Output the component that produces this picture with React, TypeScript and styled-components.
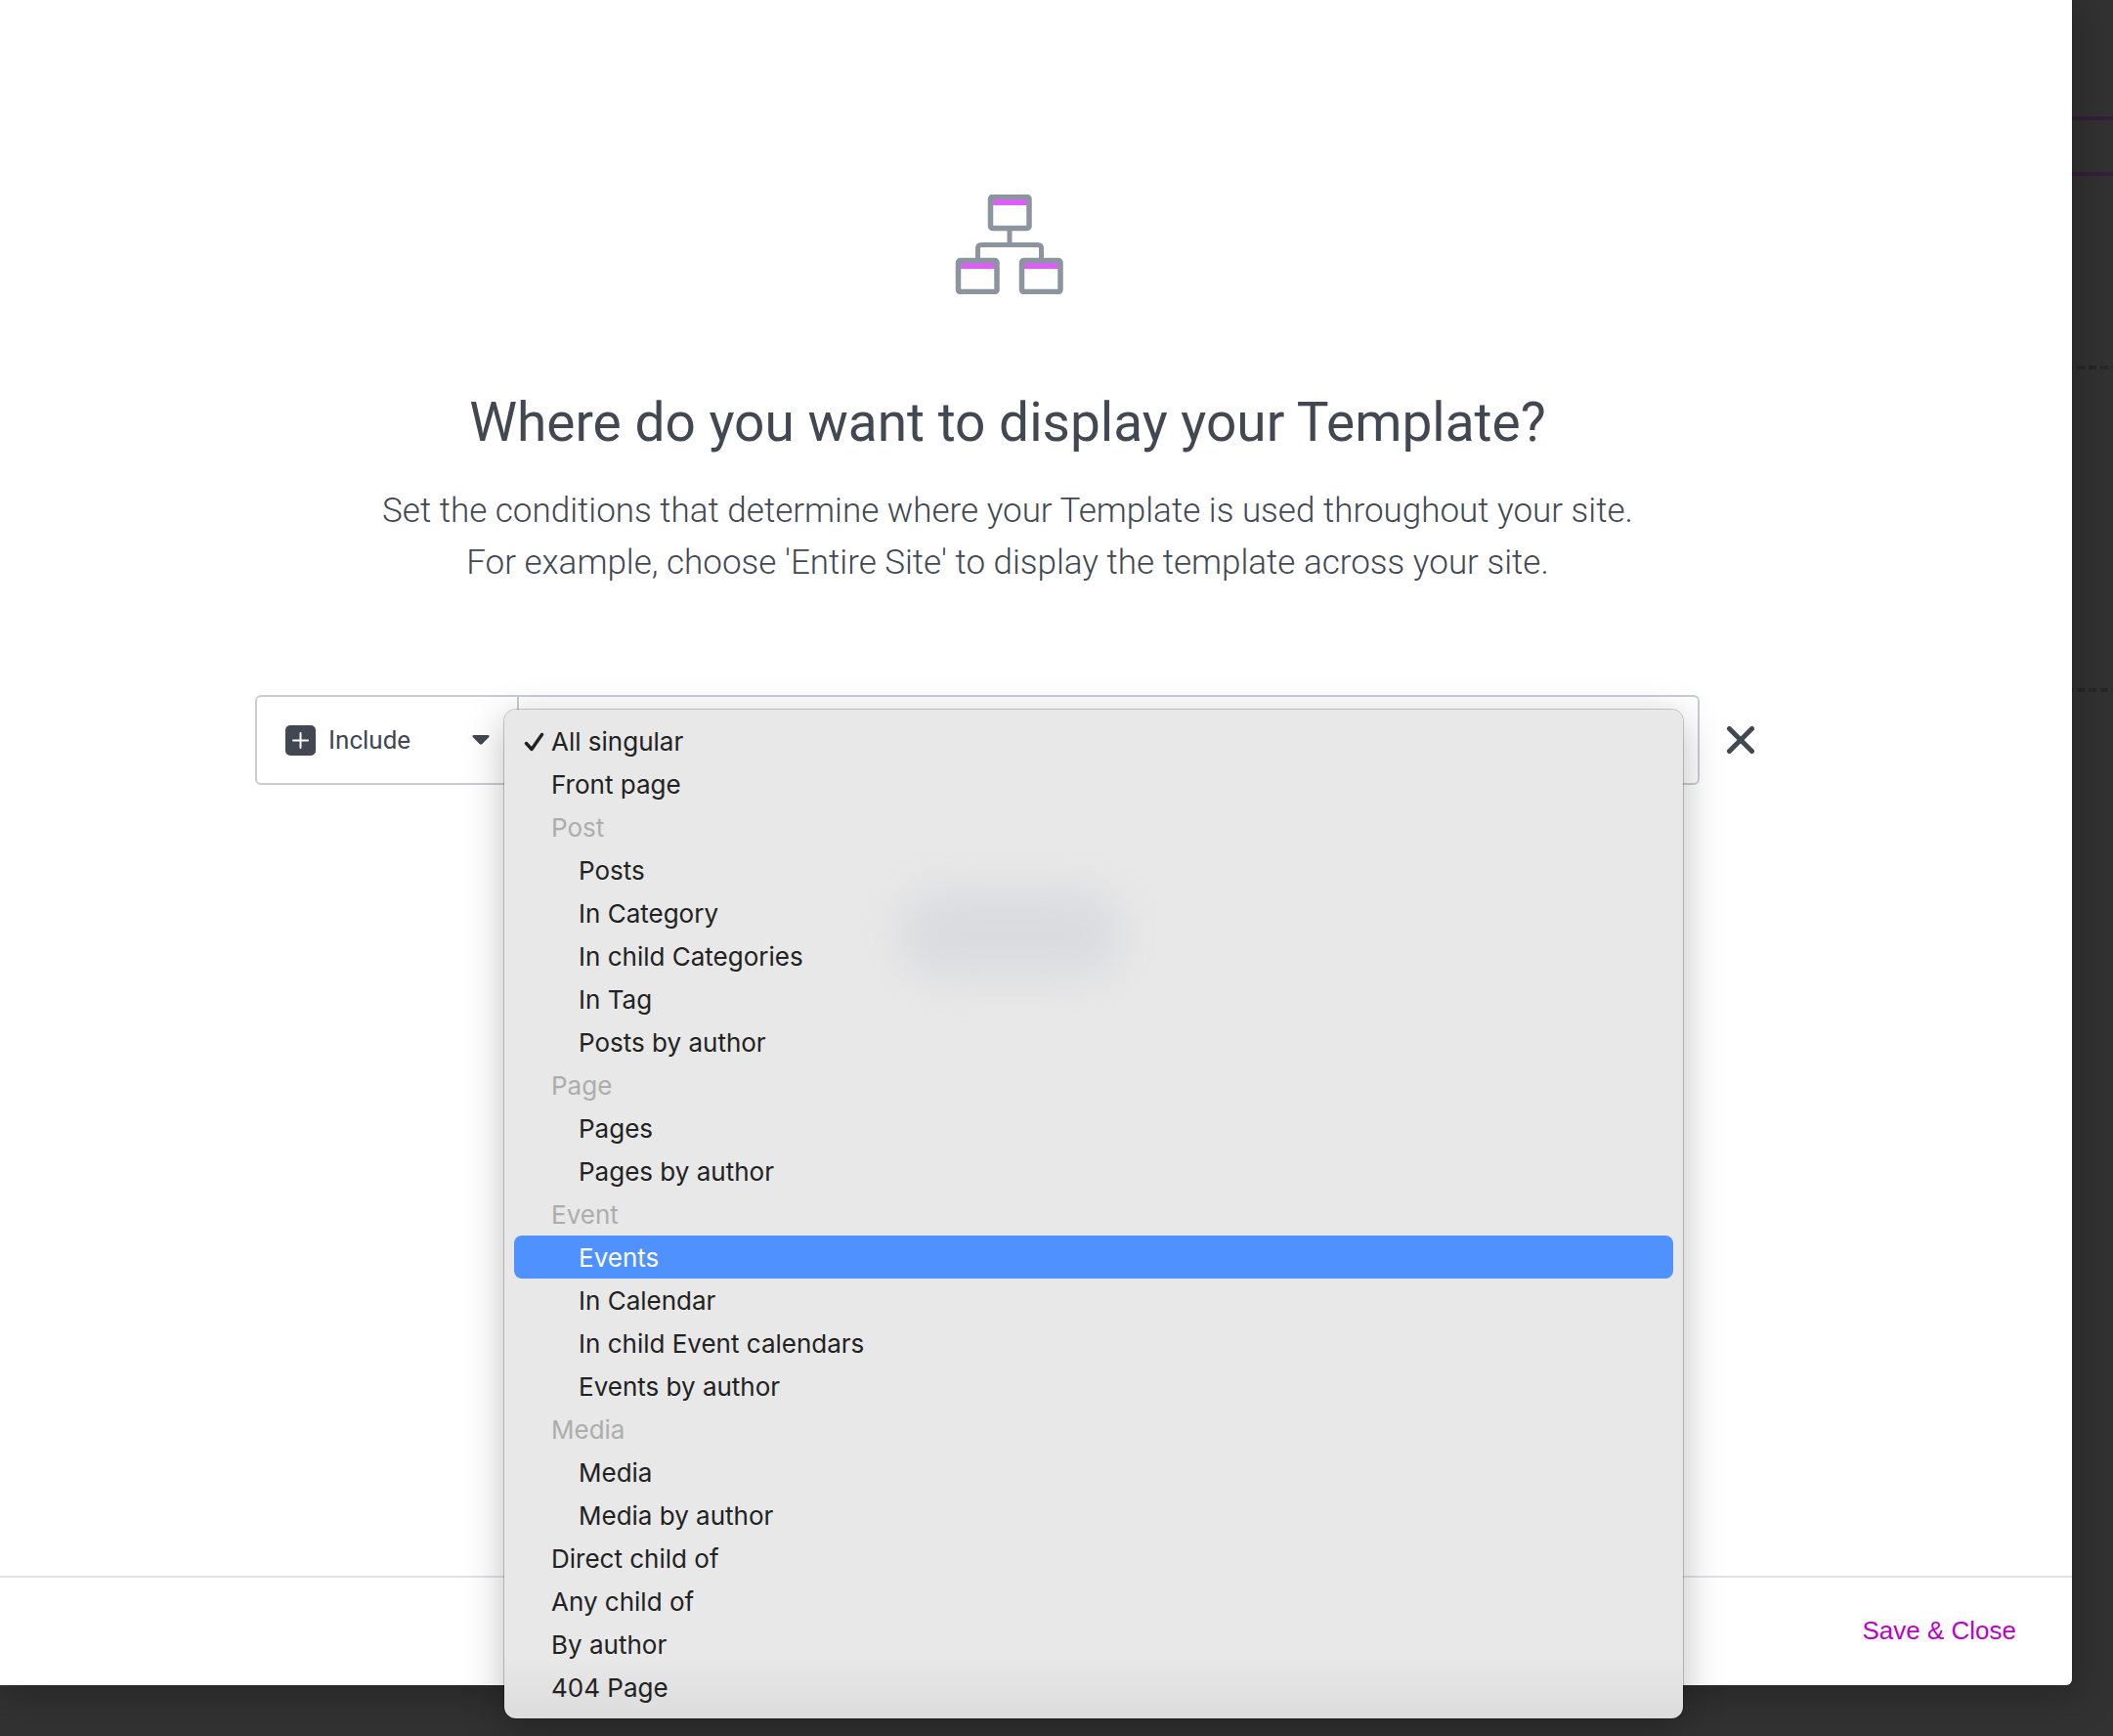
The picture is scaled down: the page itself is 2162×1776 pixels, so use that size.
import React, { useState } from "react";
import styled, { createGlobalStyle, css } from "styled-components";

const GlobalStyle = createGlobalStyle`
  *, *::before, *::after { box-sizing: border-box; }
  html, body { margin: 0; padding: 0; background: #323232; }
  body { font-family: Roboto, "Noto Sans", sans-serif; color: #414852; }
  button, select { font: inherit; color: inherit; }
`;

const Page = styled.div`
  position: relative;
  min-height: 100vh;
  padding: 0 42px 52px 0;
  display: flex;
  overflow: hidden;
  background: #323232;
`;

/* The dimmed editor canvas behind the dialog. */
const Canvas = styled.div`
  position: absolute;
  inset: 0;
  display: flex;
  flex-direction: column;
  padding-top: 119px;
`;

const SelectedSection = styled.div`
  flex: none;
  height: 61px;
  border-top: 4px solid #33203a;
  border-bottom: 4px solid #33203a;
`;

const DashedSection = styled.div`
  flex: none;
  height: 330px;
  background: repeating-linear-gradient(to right, #272727 0 8px, transparent 8px 12px) 1px 0 / 100% 4px no-repeat;
`;

const CanvasGap = styled.div`
  flex: none;
  height: 194px;
`;

const Dialog = styled.main`
  position: relative;
  flex: 1;
  min-width: 0;
  display: flex;
  flex-direction: column;
  background: #fff;
  border-radius: 0 0 6px 0;
  box-shadow: 2px 8px 40px 6px rgba(0, 0, 0, 0.22);
`;

const Body = styled.section`
  flex: 1;
  display: flex;
  flex-direction: column;
  align-items: center;
  padding: 199px 58px 0 0;
`;

const Illustration = styled.svg`
  display: block;
  width: 114px;
  height: 102px;
`;

const Title = styled.h1`
  margin: 99px 0 0;
  font-size: 55px;
  line-height: 64px;
  font-weight: 400;
  text-align: center;
`;

const Description = styled.p`
  margin: 32px 0 0;
  font-size: 35px;
  line-height: 53px;
  font-weight: 300;
  text-align: center;
`;

const ConditionRow = styled.div`
  width: 100%;
  max-width: 1540px;
  margin-top: 109px;
  display: flex;
  align-items: center;
  gap: 22px;
`;

const ConditionBox = styled.div`
  flex: 1;
  height: 92px;
  display: flex;
  border: 2px solid #c9cdd3;
  border-radius: 6px;
`;

const TypeField = styled.label`
  width: 268px;
  display: flex;
  align-items: center;
  gap: 13px;
  padding: 0 28px 0 29px;
  border-right: 2px solid #c9cdd3;
`;

const TypeSelect = styled.select`
  flex: 1;
  min-width: 0;
  appearance: none;
  border: 0;
  padding: 0;
  background: transparent;
  font-size: 26px;
  line-height: 32px;
  outline: none;
`;

const PlusBadge = styled.svg`
  flex: none;
  width: 31px;
  height: 31px;
`;

const Caret = styled.svg`
  flex: none;
  width: 18px;
  height: 10px;
`;

const ScopeField = styled.div`
  position: relative;
  flex: 1;
  display: flex;
`;

const ScopeTrigger = styled.button`
  flex: 1;
  border: 0;
  padding: 0;
  background: transparent;
`;

const Menu = styled.ul`
  position: absolute;
  top: 13px;
  left: -15px;
  right: 15px;
  z-index: 2;
  margin: 0;
  padding: 10px;
  list-style: none;
  border-radius: 12px;
  background: linear-gradient(to bottom, #e8e8e8 calc(100% - 62px), #dcdcdc 100%);
  box-shadow: 0 0 0 1px rgba(0, 0, 0, 0.2), 0 10px 40px rgba(0, 0, 0, 0.26);

  &::before {
    content: "";
    position: absolute;
    top: 184px;
    left: 404px;
    width: 228px;
    height: 90px;
    border-radius: 45px;
    background: #dadbdf;
    filter: blur(20px);
  }
`;

const MenuItem = styled.li`
  position: relative;
  display: flex;
`;

const rowText = css`
  height: 44px;
  padding-top: 2px;
  font-family: Inter, "Noto Sans", sans-serif;
  font-size: 26px;
  line-height: 42px;
`;

const GroupLabel = styled.span`
  ${rowText}
  padding-left: 38px;
  color: #adadad;
`;

const Option = styled.button<{ $nested?: boolean; $active?: boolean }>`
  ${rowText}
  flex: 1;
  display: flex;
  align-items: center;
  border: 0;
  border-radius: 8px;
  padding: 2px 0 0 ${(p) => (p.$nested ? 66 : 10)}px;
  background: ${(p) => (p.$active ? "#4f91ff" : "transparent")};
  color: ${(p) => (p.$active ? "#fff" : "#222")};
  text-align: left;
`;

const CheckSlot = styled.span`
  flex: none;
  width: 28px;
  display: flex;
`;

const RemoveButton = styled.button`
  width: 40px;
  height: 40px;
  display: grid;
  place-items: center;
  border: 0;
  padding: 0;
  background: transparent;
`;

const Footer = styled.footer`
  height: 112px;
  display: flex;
  align-items: center;
  justify-content: flex-end;
  padding: 0 57px 2px 0;
  border-top: 2px solid #e0e1e5;
`;

const SaveButton = styled.button`
  border: 0;
  padding: 0;
  background: transparent;
  color: #bb00cc;
  font-family: "Liberation Sans", Arial, sans-serif;
  font-size: 26px;
  line-height: 32px;
`;

type Entry = { label: string; kind: "top" | "group" | "nested" };

const entries: Entry[] = [
  { label: "All singular", kind: "top" },
  { label: "Front page", kind: "top" },
  { label: "Post", kind: "group" },
  { label: "Posts", kind: "nested" },
  { label: "In Category", kind: "nested" },
  { label: "In child Categories", kind: "nested" },
  { label: "In Tag", kind: "nested" },
  { label: "Posts by author", kind: "nested" },
  { label: "Page", kind: "group" },
  { label: "Pages", kind: "nested" },
  { label: "Pages by author", kind: "nested" },
  { label: "Event", kind: "group" },
  { label: "Events", kind: "nested" },
  { label: "In Calendar", kind: "nested" },
  { label: "In child Event calendars", kind: "nested" },
  { label: "Events by author", kind: "nested" },
  { label: "Media", kind: "group" },
  { label: "Media", kind: "nested" },
  { label: "Media by author", kind: "nested" },
  { label: "Direct child of", kind: "top" },
  { label: "Any child of", kind: "top" },
  { label: "By author", kind: "top" },
  { label: "404 Page", kind: "top" },
];

function SitemapIllustration() {
  const frames = [
    [39, 2],
    [6, 67],
    [71, 67],
  ];
  return (
    <Illustration viewBox="0 0 114 102" fill="none" aria-hidden="true">
      <path d="M59 37v14M26.500 66V55q0-3.500 3.500-3.500h58q3.500 0 3.500 3.500v11" stroke="#8c949f" strokeWidth="5" />
      {frames.map(([x, y]) => (
        <g key={`${x}-${y}`}>
          <path d={`M${x + 1} ${y + 6}h38`} stroke="#df5cfc" strokeWidth="6" />
          <rect x={x + 0.500} y={y + 0.500} width="39.500" height="32" rx="2" stroke="#8c949f" strokeWidth="5.500" />
        </g>
      ))}
    </Illustration>
  );
}

export default function App() {
  const [chosen, setChosen] = useState(0);
  const [active, setActive] = useState(12);

  return (
    <Page>
      <GlobalStyle />
      <Canvas aria-hidden="true">
        <SelectedSection />
        <CanvasGap />
        <DashedSection />
        <DashedSection />
      </Canvas>
      <Dialog>
        <Body>
          <SitemapIllustration />
          <Title>Where do you want to display your Template?</Title>
          <Description>
            Set the conditions that determine where your Template is used throughout your site.
            <br />
            For example, choose 'Entire Site' to display the template across your site.
          </Description>
          <ConditionRow>
            <ConditionBox>
              <TypeField>
                <PlusBadge viewBox="0 0 31 31" aria-hidden="true">
                  <rect width="31" height="31" rx="5" fill="#414852" />
                  <path d="M15.500 8v15M8 15.500h15" stroke="#fff" strokeWidth="2" strokeLinecap="round" />
                </PlusBadge>
                <TypeSelect aria-label="Condition type" defaultValue="include">
                  <option value="include">Include</option>
                </TypeSelect>
                <Caret viewBox="0 0 18 10" aria-hidden="true">
                  <path d="M1.500 0h15q2 .5.500 2.200L10.500 9q-1.500 1.300-3 0L1 2.200Q-.5.500 1.500 0z" fill="#414852" />
                </Caret>
              </TypeField>
              <ScopeField>
                <ScopeTrigger type="button" aria-haspopup="listbox" aria-expanded="true" aria-label="Display condition" />
                <Menu role="listbox" aria-label="Display condition">
                  {entries.map((entry, i) => (
                    <MenuItem key={i} role="presentation">
                      {entry.kind === "group" ? (
                        <GroupLabel>{entry.label}</GroupLabel>
                      ) : (
                        <Option
                          type="button"
                          role="option"
                          aria-selected={i === chosen}
                          $nested={entry.kind === "nested"}
                          $active={i === active}
                          onMouseMove={() => setActive(i)}
                          onClick={() => setChosen(i)}
                        >
                          {entry.kind === "top" && (
                            <CheckSlot>
                              {i === chosen && (
                                <svg width="22" height="20" viewBox="0 0 22 20" fill="none" aria-hidden="true">
                                  <path
                                    d="M2.500 11.500l5.500 6L18.500 2.500"
                                    stroke="#222"
                                    strokeWidth="3.400"
                                    strokeLinecap="round"
                                    strokeLinejoin="round"
                                  />
                                </svg>
                              )}
                            </CheckSlot>
                          )}
                          {entry.label}
                        </Option>
                      )}
                    </MenuItem>
                  ))}
                </Menu>
              </ScopeField>
            </ConditionBox>
            <RemoveButton type="button" aria-label="Remove condition">
              <svg width="28" height="28" viewBox="0 0 28 28" aria-hidden="true">
                <path d="M2.500 2.500l23 23M25.500 2.500l-23 23" stroke="#414852" strokeWidth="5" strokeLinecap="round" />
              </svg>
            </RemoveButton>
          </ConditionRow>
        </Body>
        <Footer>
          <SaveButton type="button">Save &amp; Close</SaveButton>
        </Footer>
      </Dialog>
    </Page>
  );
}
